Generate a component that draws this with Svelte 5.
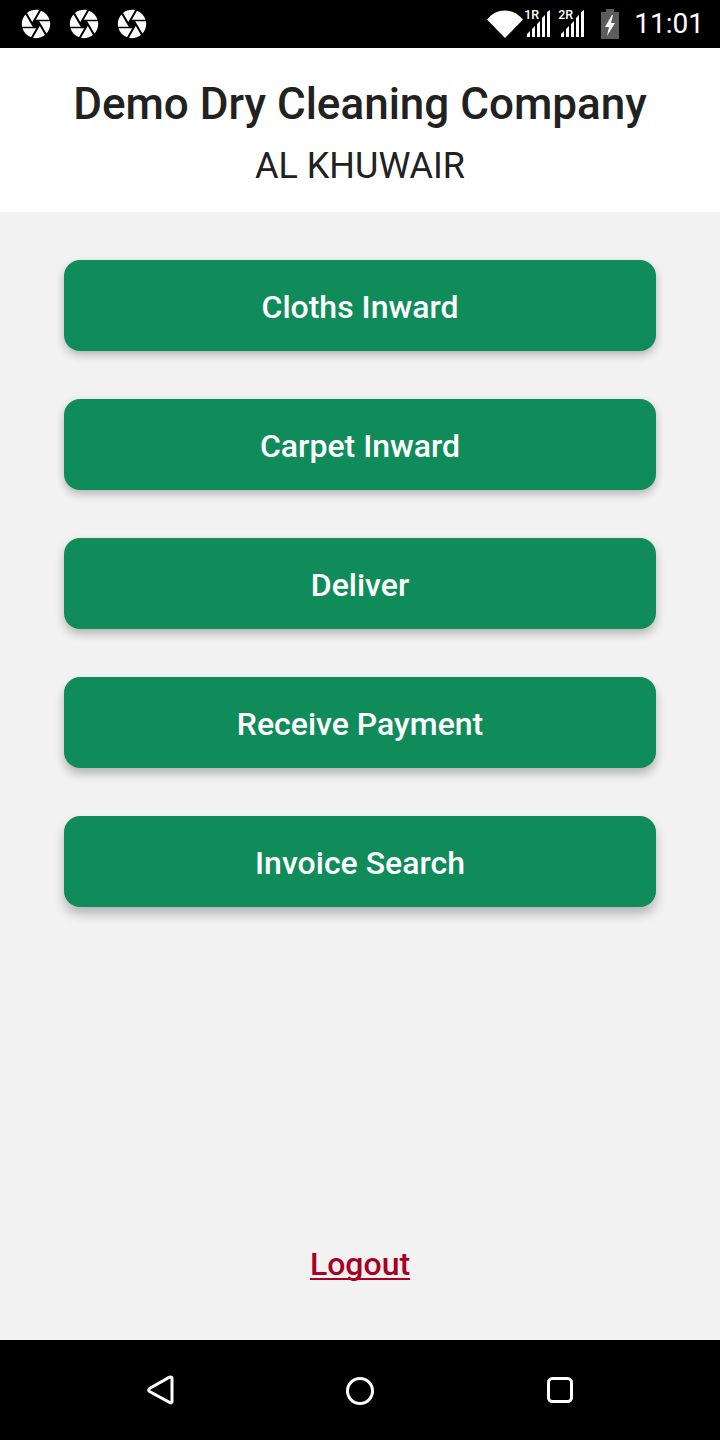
<script>
  const menu = ["Cloths Inward", "Carpet Inward", "Deliver", "Receive Payment", "Invoice Search"];
  const shutter =
    "M9.4 10.5l4.77-8.26C13.47 2.09 12.75 2 12 2c-2.4 0-4.6.85-6.32 2.25l3.66 6.35.06-.1zM21.54 9c-.92-2.92-3.15-5.26-6-6.34L11.88 9h9.66zm.26 1h-7.49l.29.5 4.76 8.25C21 16.97 22 14.61 22 12c0-.69-.07-1.35-.2-2zM8.54 12l-3.9-6.75C3.01 7.03 2 9.39 2 12c0 .69.07 1.35.2 2h7.49l-1.15-2zm-6.08 3c.92 2.92 3.15 5.26 6 6.34L12.12 15H2.46zm11.27 0l-3.9 6.76c.7.15 1.42.24 2.17.24 2.4 0 4.6-.85 6.32-2.25l-3.66-6.35-.93 1.6z";
  const sims = ["1R", "2R"];
</script>

<div class="screen">
  <div class="status">
    <div class="shutters">
      {#each [0, 1, 2] as n}
        <svg width="34" height="34" viewBox="0 0 24 24" fill="#fff"><path d={shutter} /></svg>
      {/each}
    </div>
    <div class="indicators">
      <svg class="wifi" width="36" height="28" viewBox="0 0 36 28" fill="#fff">
        <path d="M0 9.500C5 3.500 11 .5 18 .5s13 3 18 9L18 28z" />
      </svg>
      {#each sims as sim}
        <div class="signal">
          <span class="sim">{sim}</span>
          <svg width="26" height="28" viewBox="0 0 26 28" fill="#fff">
            <path d="M1 27v-3l3-3v6zM6 27v-8l3-3v11zM11 27V14l3-3v16zM16 27V8l3-3v22zM21 27V2l3-2v27z" />
          </svg>
        </div>
      {/each}
      <svg class="battery" width="18" height="30" viewBox="0 0 18 30">
        <path d="M5 0h8v3h5v27H0V3h5z" fill="#5c5c5c" />
        <path d="M11 6L4 18h4l-2 9 8-13h-4l2-8z" fill="#fff" />
      </svg>
      <span class="clock">11:01</span>
    </div>
  </div>

  <header>
    <h1>Demo Dry Cleaning Company</h1>
    <p>AL KHUWAIR</p>
  </header>

  <main>
    <div class="menu">
      {#each menu as item}
        <button>{item}</button>
      {/each}
    </div>
    <a class="logout" href="#logout">Logout</a>
  </main>

  <nav>
    <svg width="28" height="30" viewBox="0 0 28 30" fill="none" stroke="#fff" stroke-width="3" stroke-linejoin="round">
      <path d="M24.500 2c1 0 1.500.7 1.500 1.600v22.800c0 1-.9 1.800-2 1.200L3.500 16.500c-1-.6-1-2.400 0-3L23 2.400c.5-.3 1-.4 1.500-.4z" />
    </svg>
    <svg width="30" height="30" viewBox="0 0 30 30" fill="none" stroke="#fff" stroke-width="3">
      <circle cx="15" cy="16" r="12.500" />
    </svg>
    <svg width="28" height="28" viewBox="0 0 28 28" fill="none" stroke="#fff" stroke-width="3">
      <rect x="2.500" y="2.500" width="23" height="23" rx="4" />
    </svg>
  </nav>
</div>

<style>
  :global(body) {
    margin: 0;
    font-family: Roboto, sans-serif;
  }

  .screen {
    display: flex;
    flex-direction: column;
    height: 1440px;
    background: #f2f2f2;
  }

  .status {
    display: flex;
    justify-content: space-between;
    align-items: center;
    height: 48px;
    padding: 0 16px 0 19px;
    background: #000;
    color: #fff;
  }
  .shutters {
    display: flex;
    gap: 14px;
  }
  .shutters svg {
    display: block;
  }
  .indicators {
    display: flex;
    align-items: center;
  }
  .wifi {
    margin-right: 3px;
  }
  .signal {
    position: relative;
    width: 26px;
    height: 28px;
    margin-right: 8px;
  }
  .signal svg {
    display: block;
  }
  .sim {
    position: absolute;
    left: -2px;
    top: -2px;
    font-size: 12.500px;
    font-weight: 500;
    line-height: 13px;
  }
  .battery {
    margin-left: 7px;
  }
  .clock {
    margin-left: 15px;
    font-size: 28px;
    line-height: 32px;
  }

  header {
    height: 164px;
    box-sizing: border-box;
    padding-top: 30px;
    background: #fff;
    color: #212121;
    text-align: center;
  }
  h1 {
    margin: 0;
    font-size: 44px;
    font-weight: 500;
    line-height: 52px;
  }
  p {
    margin: 14px 0 0;
    font-size: 36px;
    line-height: 44px;
  }

  main {
    flex: 1;
    display: flex;
    flex-direction: column;
    align-items: center;
    padding: 48px 64px 0;
  }
  .menu {
    display: flex;
    flex-direction: column;
    gap: 48px;
    width: 100%;
  }
  button {
    height: 91px;
    padding: 3px 0 0;
    border: none;
    border-radius: 16px;
    background: #108c5a;
    color: #fff;
    font-family: inherit;
    font-size: 32px;
    font-weight: 500;
    box-shadow: 0 4px 9px rgba(0, 0, 0, 0.25);
  }
  button:nth-child(3) {
    box-shadow: 0 5px 10px rgba(0, 0, 0, 0.25);
  }
  button:nth-child(4) {
    box-shadow: 0 6px 10px rgba(0, 0, 0, 0.25);
  }
  button:nth-child(5) {
    box-shadow: 0 7px 11px rgba(0, 0, 0, 0.25);
  }
  .logout {
    margin-top: auto;
    margin-bottom: 57px;
    color: #a80024;
    font-size: 32px;
    font-weight: 500;
    line-height: 38px;
    text-decoration-thickness: 1.5px;
    text-underline-offset: 3px;
    text-decoration-skip-ink: none;
  }

  nav {
    display: flex;
    justify-content: space-between;
    align-items: center;
    height: 100px;
    padding: 0 146px;
    background: #000;
  }
</style>
